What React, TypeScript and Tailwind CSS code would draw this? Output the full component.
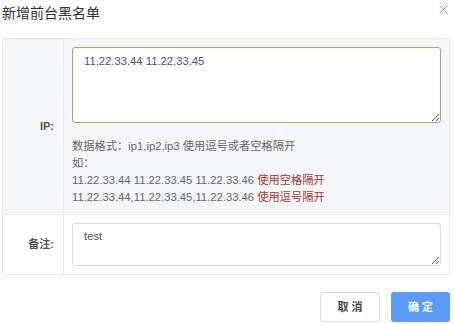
import React from "react";

const font = { fontFamily: '"Liberation Sans", "Noto Sans CJK SC", sans-serif' };

export default function App() {
  return (
    <div className="w-[454px] h-[324px] bg-white relative overflow-hidden text-[#555]" style={font}>
      {/* header */}
      <div className="h-[38px] flex items-start justify-between pl-[2px] pr-[6px]">
        <h3 className="pt-[5px] text-[14px] leading-[16px] text-[#333]">新增前台黑名单</h3>
        <button className="mt-[5px] w-[9px] h-[9px] flex items-center justify-center">
          <svg width="9" height="9" viewBox="0 0 9 9" fill="none" stroke="#aaa" strokeWidth="1">
            <path d="M0.5 0.5L8.5 8.5M8.5 0.5L0.5 8.5" />
          </svg>
        </button>
      </div>

      {/* form table */}
      <div className="ml-[2px] w-[448px] border border-[#ebebeb]">
        <div className="flex bg-[#f5f6fa] border-b border-[#ebebeb]">
          <div className="w-[61px] shrink-0 border-r border-[#ebebeb] flex items-center justify-end pr-[9px] text-[11px] font-bold text-[#555]">
            IP:
          </div>
          <div className="flex-1 pt-[8px] pb-[8px] pl-[8px] pr-[8px]">
            <textarea
              className="block w-[369px] h-[76px] bg-white border border-[#7dc15a] rounded-[3px] px-[11px] pt-[5px] text-[11.25px] leading-[16px] text-[#555] outline-none"
              style={font}
              defaultValue="11.22.33.44 11.22.33.45"
            />
            <div className="mt-[15px] text-[11.25px] leading-[17px] text-[#666]">
              <p>数据格式：ip1,ip2,ip3 使用逗号或者空格隔开</p>
              <p>如：</p>
              <p>
                11.22.33.44 11.22.33.45 11.22.33.46 <span className="text-[#a6392f]">使用空格隔开</span>
              </p>
              <p>
                11.22.33.44,11.22.33.45,11.22.33.46 <span className="text-[#a6392f]">使用逗号隔开</span>
              </p>
            </div>
          </div>
        </div>
        <div className="flex bg-white">
          <div className="w-[61px] shrink-0 border-r border-[#ebebeb] flex items-center justify-end pr-[9px] text-[11px] font-bold text-[#555]">
            备注:
          </div>
          <div className="flex-1 pt-[8px] pb-[8px] pl-[8px] pr-[8px]">
            <textarea
              className="block w-[369px] h-[43px] bg-white border border-[#dcdcdc] rounded-[3px] px-[11px] pt-[4px] text-[11.25px] leading-[16px] text-[#555] outline-none"
              style={font}
              defaultValue="test"
            />
          </div>
        </div>
      </div>

      {/* footer */}
      <div className="flex justify-end gap-[11px] pr-[4px] mt-[17px]">
        <button className="w-[60px] h-[30px] border border-[#dcdcdc] rounded-[3px] bg-white text-[11px] font-bold text-[#444] tracking-[3px] pl-[3px]">
          取消
        </button>
        <button className="w-[59px] h-[30px] rounded-[3px] bg-[#5b9cf8] text-[11px] font-bold text-white tracking-[3px] pl-[3px]">
          确定
        </button>
      </div>
    </div>
  );
}
